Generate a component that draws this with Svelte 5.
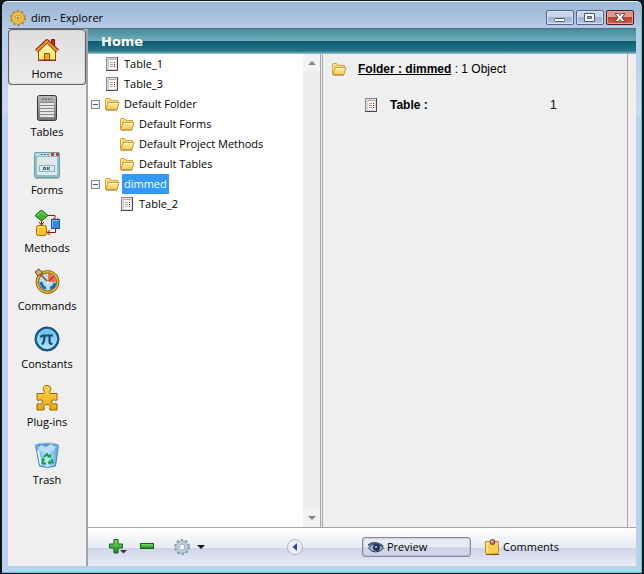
<script>
  const sections = ['Home', 'Tables', 'Forms', 'Methods', 'Commands', 'Constants', 'Plug-ins', 'Trash'];
  let current = $state('Home');

  const tree = [
    { name: 'Table_1', kind: 'table', level: 0 },
    { name: 'Table_3', kind: 'table', level: 0 },
    { name: 'Default Folder', kind: 'folder', level: 0, open: true },
    { name: 'Default Forms', kind: 'folder', level: 1 },
    { name: 'Default Project Methods', kind: 'folder', level: 1 },
    { name: 'Default Tables', kind: 'folder', level: 1 },
    { name: 'dimmed', kind: 'folder', level: 0, open: true },
    { name: 'Table_2', kind: 'table', level: 1 }
  ];
  let selected = $state('dimmed');
</script>

{#snippet tableIcon()}
  <svg class="small" viewBox="0 0 16 16" aria-hidden="true">
    <rect x="2" y="1" width="12" height="14" fill="#d9d9e8" />
    <path d="M2.500 14V1.500H13" fill="none" stroke="#8785a8" />
    <path d="M13.500 1v13.500H2" fill="none" stroke="#4d4650" />
    <rect x="4" y="3" width="8" height="10" fill="#fffaf0" />
    <path d="M4 3.500h8" stroke="#c8ab82" />
    <path d="M4.500 3v10" stroke="#d8cdbd" />
    <path d="M6 6.500h3M6 8.500h3M6 10.500h3" stroke="#b4aea8" />
    <path d="M10 6h1v1h-1zM10 8h1v1h-1zM10 10h1v1h-1z" fill="#7c2020" />
  </svg>
{/snippet}

{#snippet folderIcon()}
  <svg class="small" viewBox="0 0 16 16" aria-hidden="true">
    <path d="M1.500 12.500V3.500q0-1 1-1h3l1.500 2h6.500v8z" fill="#f2c851" stroke="#cf9f38" />
    <path d="M2.500 11V3.800h2.500l2 2h6" fill="none" stroke="#ffeeb0" />
    <path d="M1.500 13.500l2.800-7h10.700l-2 7z" fill="url(#flap)" stroke="#c99a35" stroke-linejoin="round" />
    <path d="M5 7.500h9" stroke="#fffadb" />
    <path d="M2 14.500h11" stroke="#8a6420" opacity=".5" />
  </svg>
{/snippet}

{#snippet gear(color, edge, hub)}
  <circle cx="8" cy="8" r="6.500" fill="none" stroke={edge} stroke-width="3" stroke-dasharray="2.200 1.900" />
  <circle cx="8" cy="8" r="4.500" fill={hub} stroke={edge} stroke-width="4" />
  <circle cx="8" cy="8" r="4.500" fill="none" stroke={color} stroke-width="3" />
{/snippet}

{#snippet sectionIcon(name)}
  <svg class="big" viewBox="0 0 28 28" aria-hidden="true">
    {#if name === 'Home'}
      <path d="M18.500 3.500h3v8h-3z" fill="#c62a22" stroke="#8b1713" />
      <path d="M5.500 14L14 7l8.500 7v10h-17z" fill="url(#house)" stroke="#9a4a18" />
      <path d="M3.500 15L14 5l10.500 10" fill="none" stroke="#8a350c" stroke-width="4" stroke-linejoin="round" />
      <path d="M3.700 15L14 5.300 24.300 15" fill="none" stroke="#f39a2e" stroke-width="2" />
      <path d="M11.500 17.500h5v6.500h-5z" fill="#f0a42c" stroke="#964d16" />
      <path d="M5 24.500h18" stroke="#8b2714" />
    {:else if name === 'Tables'}
      <rect x="4.500" y="1.500" width="19" height="25" rx="2" fill="url(#steel)" stroke="#353535" />
      <path d="M9 5h10" stroke="#444" stroke-dasharray="2 1" />
      <rect x="7" y="8" width="14" height="16" fill="#e6e6e6" />
      <path d="M7 8.500h14M7 11.500h14M7 14.500h14M7 17.500h14M7 20.500h14M7 23.500h14" stroke="#888" />
    {:else if name === 'Forms'}
      <rect x="1.500" y="0.500" width="25" height="25" rx="1" fill="#8fbfca" stroke="#6c9da8" />
      <path d="M2 2.500h24" stroke="#b8dbe3" stroke-width="3" />
      <path d="M8 2.500h9" stroke="#4d7782" stroke-dasharray="2 1" />
      <path d="M18 1h3v3h-3zM23 1h3v3h-3z" fill="#c63d43" />
      <rect x="4" y="5" width="20" height="18" fill="#dfe9ec" />
      <rect x="6.500" y="13.500" width="15" height="6" fill="#d4edf4" stroke="#8bb4bf" />
      <path d="M10.500 15.500h2v2h-2zM14.500 15v3M17 15l-2 1.500 2 1.500" fill="none" stroke="#3d4a50" />
      <path d="M2 26.500h24" stroke="#777" opacity=".5" />
    {:else if name === 'Methods'}
      <path d="M15 5.500h7v5M8.500 9v6M22.500 19v3.500h-8M20 8l2.500 3L25 8M6 12l2.500 3 2.500-3M17 20l-3 2.500 3 2.500" fill="none" stroke="#941614" />
      <path d="M8.500 0l6.500 5.500L8.500 11 2 5.500z" fill="#42b52c" stroke="#176911" />
      <path d="M4 5.500L8.500 2 12 5" fill="none" stroke="#94e17a" />
      <rect x="18.500" y="9.500" width="8" height="9" fill="#348bdf" stroke="#1b58a5" />
      <path d="M19.500 17v-6.500h6" fill="none" stroke="#84c3fa" />
      <rect x="3.500" y="15.500" width="10" height="10" rx="2" fill="#ffc319" stroke="#a36708" />
      <path d="M5 23v-6h6" fill="none" stroke="#fff0a1" />
    {:else if name === 'Commands'}
      <circle cx="14.500" cy="14" r="11.500" fill="#e8b72e" stroke="#8a641b" />
      <circle cx="14.500" cy="14" r="9" fill="#b4def8" stroke="#76621d" />
      <path d="M15 14V5.500a8.500 8.500 0 0 1 8 8.500z" fill="#ff6947" />
      <path d="M8 14q1 6 5 6M22 15q-1 5-5 5" fill="none" stroke="#1c65b9" stroke-width="3" />
      <path d="M6 5l9 9 6-6" fill="none" stroke="#91502f" stroke-width="1.500" />
      <path d="M2 4l4-3 3.500 4L5 8z" fill="#d9a377" stroke="#6f421e" />
      <circle cx="15" cy="14.500" r="1.500" fill="#fff3bd" />
    {:else if name === 'Constants'}
      <circle cx="14" cy="13" r="12" fill="#195f9a" stroke="#174873" />
      <circle cx="14" cy="13" r="9.500" fill="url(#disc)" stroke="#b1e4f8" />
      <path d="M8 11.500q0-2 2.500-2H20M11.500 10q0 6-2.500 8.500M16.500 10v5.500q0 3 3 2" fill="none" stroke="#124a7c" stroke-width="2.200" />
    {:else if name === 'Plug-ins'}
      <path d="M4 9.500h7q1-1 0-2.500C9 4 11 1.500 14 1.500S19 4 17 7q-1 1.500 0 2.500h7V16q-1 1-2.500 0-3-1-3 2t3 2q1.500-1 2.500 0v6h-7q-1-1 0-2.500 1-3-3-3t-3 3q1 1.500 0 2.500H4v-6q1-1 2.500 0 3 1 3-2t-3-2Q5 17 4 16z" fill="url(#puzzle)" stroke="#94640d" />
    {:else}
      <path d="M2.500 3h23l-3 21q-8 3-16 0z" fill="url(#bin)" stroke="#3f83bd" />
      <ellipse cx="14" cy="3.500" rx="11.500" ry="2.500" fill="#5b97d4" stroke="#91c7ec" />
      <path d="M5 6l3-3 5 2 5-3 5 3-3 4-6-1-6 2z" fill="#b9dcf8" />
      <path d="M5 8l3 15" stroke="#e5f7ff" stroke-width="2" />
      <path d="M11 15l3-3 2 3M18.500 17l1 3.500h-3M13 21.500h-3.500l.5-3" fill="none" stroke="#159a3c" stroke-width="2" />
      <path d="M14 15.500h4v-4zM17 18v5l-2.500-2.500zM8 18.500l2-3 2.500 3z" fill="#159a3c" />
    {/if}
  </svg>
{/snippet}

<svg class="defs" aria-hidden="true">
  <defs>
    <linearGradient id="house" x2="0" y2="1"><stop stop-color="#fff9bd" /><stop offset="1" stop-color="#f9e85d" /></linearGradient>
    <linearGradient id="steel" x2="0" y2="1"><stop stop-color="#b9b9b9" /><stop offset="1" stop-color="#737373" /></linearGradient>
    <linearGradient id="disc" x2="0" y2="1"><stop stop-color="#62bbe7" /><stop offset="1" stop-color="#a9e7fb" /></linearGradient>
    <linearGradient id="puzzle" x2="0" y2="1"><stop stop-color="#ffd84a" /><stop offset="1" stop-color="#efa60d" /></linearGradient>
    <linearGradient id="bin"><stop stop-color="#4f9de2" /><stop offset=".5" stop-color="#c3e9ff" /><stop offset="1" stop-color="#5aa5dd" /></linearGradient>
    <linearGradient id="leaf" x2="0" y2="1"><stop stop-color="#8be06c" /><stop offset="1" stop-color="#168b19" /></linearGradient>
    <linearGradient id="flap" x2="0" y2="1"><stop stop-color="#fdf0a8" /><stop offset="1" stop-color="#f4cb55" /></linearGradient>
  </defs>
</svg>

<div class="window">
  <header class="titlebar">
    <svg class="small" viewBox="0 0 16 16" aria-hidden="true">{@render gear('#edbd43', '#b98420', '#f6e2a0')}<circle cx="8" cy="8" r="1.500" fill="#b98420" /></svg>
    <h1>dim - Explorer</h1>
    <button class="caption" aria-label="Minimize"><svg viewBox="0 0 26 13"><rect x="7.500" y="7.500" width="10" height="3" rx="1" fill="#fff" stroke="#525a70" /></svg></button>
    <button class="caption" aria-label="Maximize"><svg viewBox="0 0 26 13"><path fill-rule="evenodd" d="M7.500 2.500h10v8h-10zM10.500 5.500v2h4v-2z" fill="#fff" stroke="#525a70" /></svg></button>
    <button class="caption close" aria-label="Close"><svg viewBox="0 0 26 13"><path d="M8 2.500h3.500L13 4.500l1.500-2H18L15 6.500l3 4h-3.500L13 8.500l-1.500 2H8l3-4z" fill="#fff" stroke="#5d4650" /></svg></button>
  </header>

  <div class="body">
    <nav class="sections">
      {#each sections as name}
        <button class:active={current === name} onclick={() => (current = name)}>
          {@render sectionIcon(name)}
          <span>{name}</span>
        </button>
      {/each}
    </nav>

    <main>
      <h2>{current}</h2>
      <div class="panes">
        <div class="list">
          <ul>
            {#each tree as item}
              <li class:nested={item.level === 1}>
                {#if item.open}
                  <button class="toggle" aria-label="Collapse {item.name}"></button>
                {:else}
                  <span class="spacer"></span>
                {/if}
                {#if item.kind === 'table'}{@render tableIcon()}{:else}{@render folderIcon()}{/if}
                <button class="name" class:selected={selected === item.name} onclick={() => (selected = item.name)}>{item.name}</button>
              </li>
            {/each}
          </ul>
          <div class="scroll">
            <button aria-label="Scroll up"><svg viewBox="0 0 8 4"><path d="M0 4l4-4 4 4z" fill="#858585" /></svg></button>
            <button aria-label="Scroll down"><svg viewBox="0 0 8 4"><path d="M0 0h8L4 4z" fill="#858585" /></svg></button>
          </div>
        </div>
        <section class="preview">
          <div class="summary">
            {@render folderIcon()}
            <p><b><u>Folder : dimmed</u></b> : 1 Object</p>
          </div>
          <div class="count">
            {@render tableIcon()}
            <b>Table :</b>
            <span>1</span>
          </div>
        </section>
      </div>

      <footer>
        <div class="tools">
          <button aria-label="Add"><svg width="20" height="18" viewBox="0 0 20 18"><path d="M6 1.500h4v4.500h4.500v4H10v5H6v-5H1.500V6H6z" fill="url(#leaf)" stroke="#17601a" /><path d="M12 12h7l-3.500 3.500z" fill="#303038" /></svg></button>
          <button aria-label="Remove"><svg width="16" height="18" viewBox="0 0 16 18"><rect x="1.500" y="5.500" width="13" height="5" fill="url(#leaf)" stroke="#17601a" /></svg></button>
          <button class="options" aria-label="Options">
            <svg width="16" height="16" viewBox="0 0 16 16">{@render gear('#b8cadb', '#8799ae', '#f3f6fc')}</svg>
            <svg width="8" height="4" viewBox="0 0 8 4"><path d="M0 0h8L4 4z" fill="#17171c" /></svg>
          </button>
          <button class="collapse" aria-label="Hide preview pane"><svg width="16" height="16" viewBox="0 0 16 16"><circle cx="8" cy="8" r="7.500" fill="#eceef5" stroke="#b2b5c6" /><path d="M10 4v8L5.500 8z" fill="#2448ad" /></svg></button>
        </div>
        <div class="views">
          <button class="view pressed" aria-pressed="true">
            <svg class="small" viewBox="0 0 16 16" aria-hidden="true"><path d="M.5 9Q4 4 9 5q4 .5 6.500 4-3 4-8 4Q3 13 .5 9z" fill="#9fb2c8" stroke="#243c5a" /><path d="M0 6.500Q7 1 15 7.500" fill="none" stroke="#3f5877" stroke-width="2" /><circle cx="8.500" cy="8.500" r="3.500" fill="#243066" /><circle cx="8" cy="8" r="1" fill="#cbd6f4" /></svg>
            Preview
          </button>
          <button class="view" aria-pressed="false">
            <svg class="small" viewBox="0 0 16 16" aria-hidden="true"><path d="M1.500 2.500h13v12l-12 1-1-1z" fill="#f8cf4f" stroke="#c08c32" /><path d="M3 13V4h5" fill="none" stroke="#fff0a5" /><path d="M2 15.500h13" stroke="#805011" /><circle cx="8.500" cy="3" r="2.500" fill="#bd6e70" stroke="#7b3e46" /><circle cx="8" cy="2.500" r="1" fill="#f0c4bf" /></svg>
            Comments
          </button>
        </div>
      </footer>
    </main>
  </div>
</div>

<style>
  :global(body) { margin: 0; background: #10181c; }
  * { box-sizing: border-box; }
  button { font: inherit; color: inherit; background: none; border: 0; padding: 0; margin: 0; }
  svg { display: block; flex: none; }
  .defs { position: absolute; width: 0; height: 0; }
  .small { width: 16px; height: 16px; }
  .big { width: 28px; height: 28px; }

  .window {
    min-height: 100vh;
    display: flex;
    flex-direction: column;
    padding: 0 6px 7px;
    border: 1px solid #0c1216;
    border-left-width: 2px;
    border-right-width: 2px;
    border-radius: 7px 7px 0 0;
    background: linear-gradient(#9bb5d5, #b6cde7 30px, #c6dbf0 110px, #b9d1ea 120px);
    box-shadow: inset 0 1px #e8f3fc, inset -1px -1px #55c4dc;
    font: 11px/20px "Open Sans", "Noto Sans", sans-serif;
    color: #000;
  }
  .titlebar { display: flex; align-items: center; gap: 2px; height: 27px; padding: 6px 2px 0; }
  .titlebar h1 { flex: 1; margin: 0 0 0 3px; font-size: 11px; font-weight: 400; }
  .caption {
    width: 28px;
    height: 15px;
    border: 1px solid #55637e;
    border-radius: 2px;
    background: linear-gradient(#c6d7eb 50%, #98b3d2 50%, #b1c9e3);
    box-shadow: inset 0 0 0 1px #d7e4f2;
  }
  .caption svg { width: 26px; height: 13px; }
  .close { border-color: #4a1a20; background: linear-gradient(#dd9a8c 50%, #bd3c2a 50%, #cf6450); box-shadow: inset 0 0 0 1px #e5a496; }

  .body { flex: 1; display: flex; border-top: 1px solid #626977; background: #efefef; }
  .sections { width: 80px; flex: none; border-right: 2px solid #a3a3a3; }
  .sections button {
    display: flex;
    flex-direction: column;
    align-items: center;
    width: 100%;
    height: 58px;
    padding-top: 7px;
  }
  .sections .active { height: 56px; margin-bottom: 2px; border-radius: 4px; box-shadow: inset 0 0 0 1px #64646b, inset 0 0 3px #9a9a9a; background: linear-gradient(#dedee1, #ededed); }

  main { flex: 1; min-width: 0; display: flex; flex-direction: column; }
  h2 {
    margin: 0;
    height: 25px;
    padding-left: 13px;
    font: 700 13px/25px "DejaVu Sans", sans-serif;
    color: #fff;
    background: linear-gradient(#3f8e9e, #74acb7 12px, #0d5b72 12px, #26758a 22px, #9cc3ca 25px);
  }
  .panes { flex: 1; display: flex; padding-right: 8px; }
  .list { width: 233px; flex: none; display: flex; background: #fffffe; border-right: 1px solid #a5a5a5; }
  ul { flex: 1; list-style: none; margin: 0; padding: 0 0 0 3px; }
  li { display: flex; align-items: center; height: 20px; }
  .nested { padding-left: 15px; }
  .toggle, .spacer { width: 9px; height: 9px; margin-right: 4px; }
  .toggle { border: 1px solid #81868f; background: linear-gradient(#425c9b, #425c9b) center / 5px 1px no-repeat #f3f3f3; }
  .name { height: 20px; margin-left: 2px; padding: 0 2px; }
  .selected { background: #3399ff; color: #fff; }
  .scroll { width: 17px; display: flex; flex-direction: column; justify-content: space-between; background: #eee; }
  .scroll button { height: 18px; display: grid; place-items: center; background: #f2f2f2; }
  .scroll svg { width: 8px; height: 4px; }

  .preview { flex: 1; margin-left: 1px; padding: 6px 8px; border: solid #a5a5a5; border-width: 0 1px; font: 12px/18px "Liberation Sans", sans-serif; }
  .summary, .count { display: flex; align-items: center; }
  p { margin: 0 0 0 11px; }
  .count { margin-top: 18px; padding-left: 32px; }
  .count b { width: 160px; margin-left: 11px; }

  footer {
    display: flex;
    align-items: center;
    height: 39px;
    padding-left: 20px;
    border-top: 1px solid #a5a5a5;
    background: linear-gradient(#fff, #e7eaf5 20px, #cfd5ea 20px, #e9ebf5);
  }
  .tools { display: flex; align-items: center; width: 254px; flex: none; }
  .tools button { margin-right: 11px; }
  .tools .options { display: flex; align-items: center; gap: 7px; margin-left: 8px; }
  .tools .collapse { margin: 0 59px 0 auto; }
  .views { display: flex; gap: 12px; }
  .view { display: flex; align-items: center; gap: 3px; height: 20px; border: 1px solid transparent; }
  .pressed { width: 109px; padding-left: 5px; border-color: #85899a; border-radius: 3px; background: linear-gradient(#e9ebf3 50%, #d0d6e8 50%); box-shadow: inset 0 0 2px #8b8fa3; }
</style>
